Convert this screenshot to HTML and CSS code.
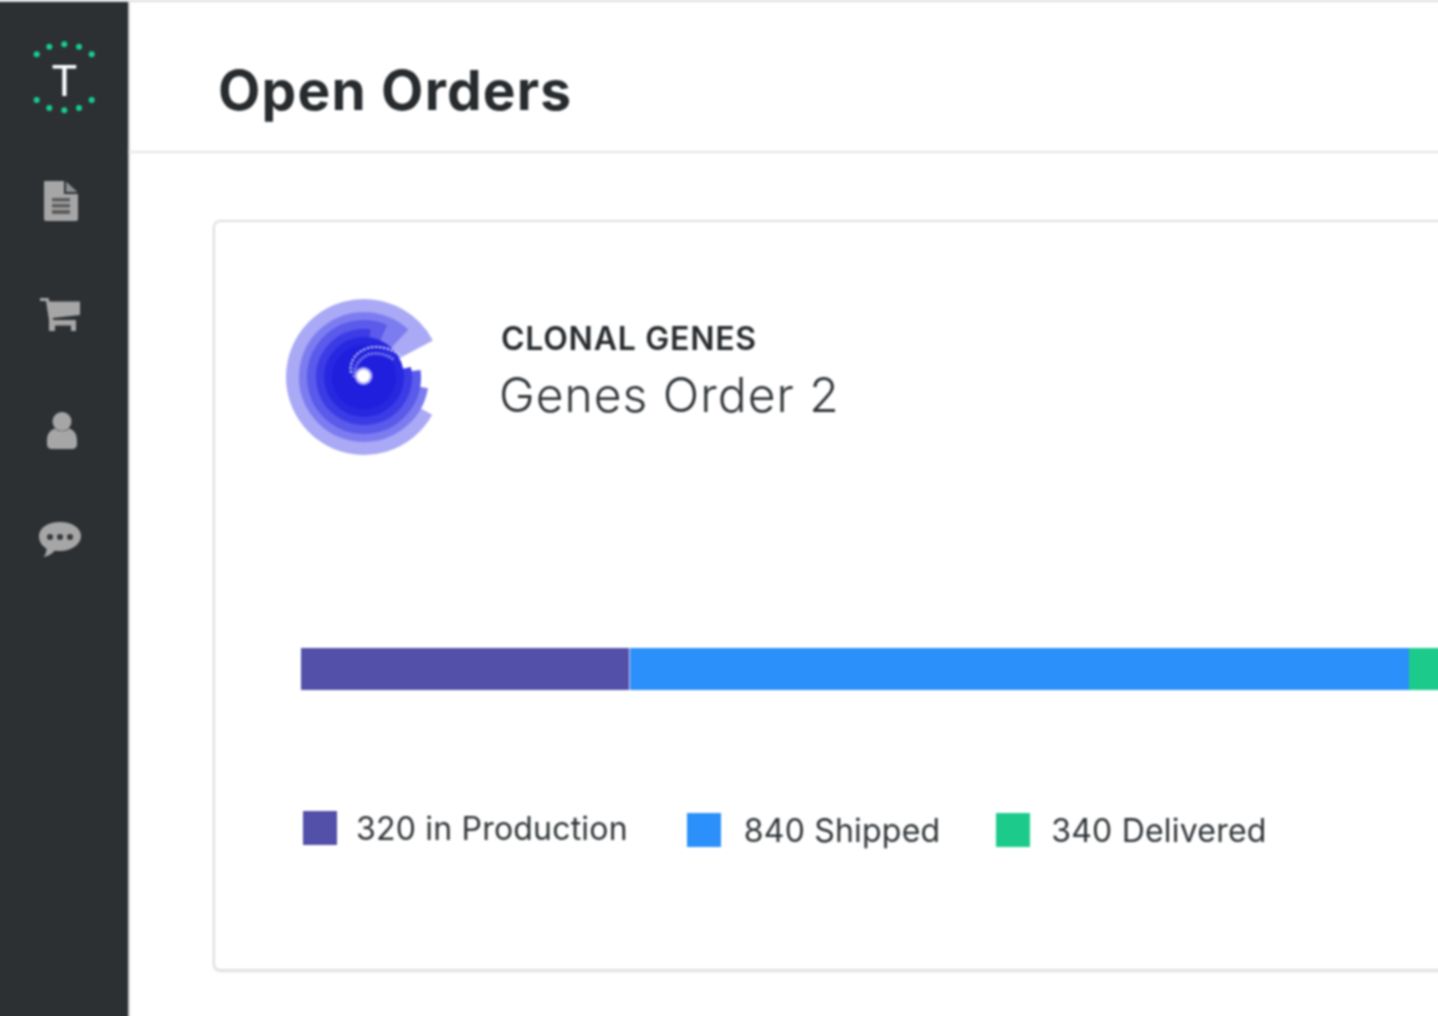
FILE: index.html
```html
<!DOCTYPE html>
<html lang="en">
<head>
<meta charset="utf-8">
<title>Open Orders</title>
<link rel="stylesheet" href="styles.css">
</head>
<body>
<div class="app">
  <nav class="sidebar">
    <svg class="logo" viewBox="0 0 128 80" width="128" height="80">
      <g fill="#17cf8d">
        <circle cx="36.7" cy="14.3" r="3"/><circle cx="49.3" cy="6.7" r="3"/><circle cx="64.3" cy="4.3" r="3"/><circle cx="79" cy="6.7" r="3"/><circle cx="91.7" cy="14.3" r="3"/>
        <circle cx="36.7" cy="60" r="3"/><circle cx="49.3" cy="68" r="3"/><circle cx="64.3" cy="70.3" r="3"/><circle cx="79" cy="68" r="3"/><circle cx="91.7" cy="60" r="3"/>
      </g>
      <text x="64.3" y="56" class="logo-t" text-anchor="middle">T</text>
    </svg>
    <svg class="nav-icon nav-doc" viewBox="0 0 34 40" width="34" height="40">
      <path fill="#a6a6a6" d="M1 0H20V13H34V38a2 2 0 0 1-2 2H2a2 2 0 0 1-2-2V1a1 1 0 0 1 1-1Z"/>
      <path fill="#8f8f8f" d="M22 0.5 33.5 11H22Z"/>
      <path fill="#5c5c5c" d="M8 17H26V20.500H8ZM8 23H26V26.500H8ZM8 29H26V33H8Z"/>
    </svg>
    <svg class="nav-icon nav-cart" viewBox="0 0 40 34" width="40" height="34">
      <path fill="#a6a6a6" d="M0 0H8.500L9.500 3.500H40V17L13 20V22H36V33H31V27.500H15V33H9V22L6 3H0Z"/>
    </svg>
    <svg class="nav-icon nav-user" viewBox="0 0 30 37" width="30" height="37">
      <circle cx="15" cy="9.500" r="9.500" fill="#a6a6a6"/>
      <path fill="#a6a6a6" d="M8 16.500C11 20 19 20 22 16.500 27 18 30 22 30 29V32C30 35 28 37 25 37H5C2 37 0 35 0 32V29C0 22 3 18 8 16.500Z"/>
    </svg>
    <svg class="nav-icon nav-chat" viewBox="0 0 42 35" width="42" height="35">
      <path fill="#a6a6a6" d="M21 0C33 0 42 6 42 14 42 22 33 29 21 29 19 29 17.500 29 16 28.500 13 32 8 34.500 4.500 35 6.500 32.500 7.500 30 7.500 26.500 3 24 0 19.500 0 14 0 6 9 0 21 0Z"/>
      <g fill="#35393c"><circle cx="11" cy="15" r="3"/><circle cx="21" cy="15" r="3"/><circle cx="31" cy="15" r="3"/></g>
    </svg>
  </nav>
  <main class="main">
    <header class="page-header">
      <h1 class="page-title">Open Orders</h1>
    </header>
    <section class="card">
      <div class="order-head">
        <svg class="organism" viewBox="0 0 160 160" width="160" height="160">
          <g fill="none">
            <circle cx="80" cy="80" r="39" stroke="#a9a9f6" stroke-width="78" pathLength="360" stroke-dasharray="303 57" transform="rotate(29 80 80)"/>
            <circle cx="80" cy="80" r="32.500" stroke="#7c7cf0" stroke-width="65" pathLength="360" stroke-dasharray="303 57" transform="rotate(10 80 80)"/>
            <circle cx="80" cy="80" r="28.500" stroke="#5a5aeb" stroke-width="57" pathLength="360" stroke-dasharray="301 59" transform="rotate(-7 80 80)"/>
            <circle cx="80" cy="80" r="24" stroke="#3c3ce6" stroke-width="48" pathLength="360" stroke-dasharray="290 70" transform="rotate(-12 80 80)"/>
            <circle cx="80" cy="80" r="20" stroke="#2828e1" stroke-width="40"/>
            <circle cx="80" cy="80" r="16" stroke="#1f1fdd" stroke-width="32"/>
            <path stroke="#c9c9f8" stroke-width="2.200" stroke-dasharray="2.500 1.500" d="M67 76C65 66 71 55 84 51 95 48 110 52 120 61"/>
            <path stroke="#8f8ff2" stroke-width="3" stroke-dasharray="2 1.500" d="M70 80C69 70 76 60 86 57 94 55 104 58 110 63"/>
          </g>
          <circle cx="79.500" cy="79" r="9" fill="#a9a9f6"/>
          <circle cx="79.500" cy="79" r="6.500" fill="#fff"/>
        </svg>
        <div class="order-text">
          <div class="order-company">CLONAL GENES</div>
          <div class="order-name">Genes Order 2</div>
        </div>
      </div>
      <div class="progress">
        <div class="seg seg-prod"></div>
        <div class="seg seg-ship"></div>
        <div class="seg seg-done"></div>
      </div>
      <div class="legend">
        <div class="legend-item legend-first"><span class="swatch seg-prod"></span><span>320 in Production</span></div>
        <div class="legend-item legend-ship"><span class="swatch seg-ship"></span><span>840 Shipped</span></div>
        <div class="legend-item legend-done"><span class="swatch seg-done"></span><span>340 Delivered</span></div>
      </div>
    </section>
  </main>
</div>
</body>
</html>
```
FILE: styles.css
```css
* { box-sizing: border-box; }
html, body { margin: 0; height: 100%; background: #fff; overflow: hidden; }
body { font-family: "Inter", "Liberation Sans", sans-serif; color: #2c3033; }
.app {
  display: flex;
  width: 1446px;
  height: 1020px;
  margin-left: -4px;
  border-top: 2px solid #dedede;
  filter: blur(0.8px);
  overflow: hidden;
}
.sidebar {
  flex: 0 0 132px;
  background: #2c3033;
  display: flex;
  flex-direction: column;
  align-items: center;
  padding: 38px 0 0 4px;
  box-shadow: 1px 0 2px #a0a0a0;
}
.logo { display: block; flex: none; }
.logo-t { font-family: "Lato", sans-serif; font-weight: 400; font-size: 42px; fill: #fff; }
.nav-icon { display: block; flex: none; }
.nav-doc { margin: 61px 7px 0 0; }
.nav-cart { margin: 77px 9px 0 0; }
.nav-user { margin: 80px 4px 0 0; }
.nav-chat { margin: 73px 8px 0 0; }
.main { flex: 1; min-width: 0; }
.page-header {
  height: 151px;
  border-bottom: 2px solid #e4e4e4;
  padding: 55px 0 0 90px;
}
.page-title {
  margin: 0;
  font-size: 55px;
  line-height: 66px;
  font-weight: 700;
  letter-spacing: 1.2px;
  color: #272b2e;
}
.card {
  width: 1400px;
  height: 751px;
  margin: 67px 0 0 85px;
  border: 2px solid #dfdfdf;
  border-radius: 7px;
  box-shadow: 0 1px 2px #e0e0e0;
  padding: 75px 0 0 69px;
}
.order-head { display: flex; align-items: center; height: 160px; }
.organism { display: block; flex: none; }
.order-text { margin: 0 0 0 55px; padding-bottom: 8px; }
.order-company { font-size: 32px; line-height: 44px; font-weight: 600; letter-spacing: 0.75px; color: #272b2e; margin-left: 2px; }
.order-name { font-size: 48px; line-height: 68px; font-weight: 300; letter-spacing: 1px; color: #2f3336; }
.progress { display: flex; height: 42px; margin: 191px 0 0 17px; width: 1240px; }
.seg { height: 100%; }
.seg-prod { background: #5350a9; }
.seg-ship { background: #2b90f9; }
.seg-done { background: #1ccb8c; }
.progress .seg-prod { width: 329px; border-right: 1px solid #d5d5f0; }
.progress .seg-ship { width: 779px; }
.progress .seg-done { width: 132px; }
.legend { display: flex; align-items: flex-start; margin: 123px 0 0 19px; font-size: 32px; letter-spacing: 0.2px; line-height: 36px; color: #2f3336; }
.legend-item { display: flex; align-items: center; gap: 19px; margin-right: 56px; }
.legend-first { margin-top: -2px; margin-right: 59px; }
.legend-ship .swatch { margin-right: 4px; }
.legend-done .swatch { margin-right: 2px; }
.swatch { display: block; width: 34px; height: 34px; flex: none; margin-bottom: 2px; }
```
